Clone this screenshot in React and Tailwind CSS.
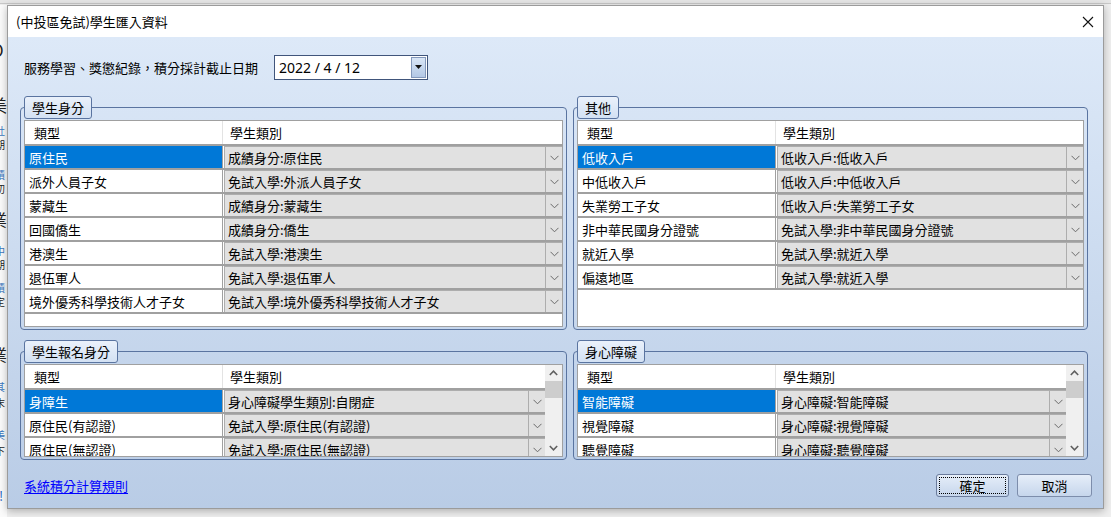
import React from "react";

const upperLeft = [
  ["原住民", "成績身分:原住民"],
  ["派外人員子女", "免試入學:外派人員子女"],
  ["蒙藏生", "成績身分:蒙藏生"],
  ["回國僑生", "成績身分:僑生"],
  ["港澳生", "免試入學:港澳生"],
  ["退伍軍人", "免試入學:退伍軍人"],
  ["境外優秀科學技術人才子女", "免試入學:境外優秀科學技術人才子女"],
];
const upperRight = [
  ["低收入戶", "低收入戶:低收入戶"],
  ["中低收入戶", "低收入戶:中低收入戶"],
  ["失業勞工子女", "低收入戶:失業勞工子女"],
  ["非中華民國身分證號", "免試入學:非中華民國身分證號"],
  ["就近入學", "免試入學:就近入學"],
  ["偏遠地區", "免試入學:就近入學"],
];
const lowerLeft = [
  ["身障生", "身心障礙學生類別:自閉症"],
  ["原住民(有認證)", "免試入學:原住民(有認證)"],
  ["原住民(無認證)", "免試入學:原住民(無認證)"],
];
const lowerRight = [
  ["智能障礙", "身心障礙:智能障礙"],
  ["視覺障礙", "身心障礙:視覺障礙"],
  ["聽覺障礙", "身心障礙:聽覺障礙"],
];

function Chevron() {
  return (
    <svg width="9" height="6" viewBox="0 0 9 6">
      <polyline points="0.5,0.8 4.5,4.8 8.5,0.8" fill="none" stroke="#6a6a6a" strokeWidth="1" />
    </svg>
  );
}

function Group({ title, children }) {
  return (
    <div className="relative pt-[11px] h-full">
      <div className="h-full border border-[#5a74a0] rounded-[4px] pt-[12px] px-[3px] pb-[2px] flex flex-col">
        {children}
      </div>
      <div className="absolute left-[4px] top-0 h-[23px] px-[7px] flex items-center border border-[#5a74a0] rounded-[3px] bg-gradient-to-b from-[#eaf1fb] to-[#d3e1f3] text-[13px] text-black leading-none">
        {title}
      </div>
    </div>
  );
}

function Rows({ rows }) {
  return (
    <>
      <div className="flex h-[25px] border-b-2 border-[#a0a0a0] bg-white shrink-0">
        <div className="w-[198px] shrink-0 border-r border-[#e3e3e3] pl-[9px] flex items-center">類型</div>
        <div className="flex-1 pl-[7px] flex items-center">學生類別</div>
      </div>
      {rows.map(([a, b], i) => (
        <div key={i} className="flex h-[24px] border-b-2 border-[#a0a0a0] shrink-0">
          <div
            className={`w-[198px] shrink-0 pl-[4px] flex items-center border-r border-[#a0a0a0] whitespace-nowrap overflow-hidden ${
              i === 0 ? "bg-[#0078d7] text-white" : "bg-white text-black"
            }`}
          >
            {a}
          </div>
          <div className="flex-1 min-w-0 pl-[1px] bg-white flex">
            <div className="flex-1 min-w-0 flex bg-[#e1e1e1] border-t border-l border-[#adadad]">
              <div className="flex-1 min-w-0 pl-[3px] flex items-center whitespace-nowrap overflow-hidden">{b}</div>
              <div className="w-[17px] shrink-0 border-l border-[#adadad] flex items-center justify-center">
                <Chevron />
              </div>
            </div>
          </div>
        </div>
      ))}
    </>
  );
}

function Table({ rows }) {
  return (
    <div className="flex-1 min-h-0 border border-[#a0a0a0] bg-white flex flex-col overflow-hidden text-[13px] leading-none">
      <Rows rows={rows} />
    </div>
  );
}

function ScrollTable({ rows }) {
  return (
    <div className="flex-1 min-h-0 border border-[#a0a0a0] bg-white flex overflow-hidden text-[13px] leading-none">
      <div className="flex-1 min-w-0 flex flex-col overflow-hidden">
        <Rows rows={rows} />
      </div>
      <div className="w-[17px] shrink-0 bg-[#f0f0f0] flex flex-col">
        <div className="h-[16px] flex items-center justify-center">
          <svg width="9" height="6" viewBox="0 0 9 6">
            <polyline points="0.8,5 4.5,1.2 8.2,5" fill="none" stroke="#606060" strokeWidth="1.6" />
          </svg>
        </div>
        <div className="h-[17px] bg-[#cdcdcd]" />
        <div className="flex-1" />
        <div className="h-[17px] flex items-center justify-center">
          <svg width="9" height="6" viewBox="0 0 9 6">
            <polyline points="0.8,1 4.5,4.8 8.2,1" fill="none" stroke="#606060" strokeWidth="1.6" />
          </svg>
        </div>
      </div>
    </div>
  );
}

function BgChar({ top, left, size, color, children }) {
  return (
    <span
      className="absolute leading-none whitespace-nowrap"
      style={{ top, left, fontSize: size, color }}
    >
      {children}
    </span>
  );
}

export default function App() {
  return (
    <div className="relative w-[1111px] h-[517px] overflow-hidden bg-[#efefef] font-['Noto_Sans_CJK_TC','Noto_Sans',sans-serif] text-black">
      {/* background window behind dialog */}
      <div className="absolute left-0 top-0 w-full h-[4px] bg-[#e6e6e6] border-b border-[#c8c8c8]" />
      <div className="absolute left-0 top-[5px] w-[7px] h-[512px] bg-[#fbfbfb] overflow-hidden">
        <BgChar top={36} left={-9} size={17} color="#222">O</BgChar>
        <BgChar top={91} left={-10} size={17} color="#222">美</BgChar>
        <BgChar top={121} left={-5} size={10} color="#3a78c0">社</BgChar>
        <BgChar top={135} left={-5} size={10} color="#222">期</BgChar>
        <BgChar top={165} left={-5} size={10} color="#3a78c0">積</BgChar>
        <BgChar top={179} left={-5} size={10} color="#222">初</BgChar>
        <BgChar top={206} left={-10} size={17} color="#222">業</BgChar>
        <BgChar top={241} left={-5} size={10} color="#3a78c0">中</BgChar>
        <BgChar top={255} left={-5} size={10} color="#222">期</BgChar>
        <BgChar top={278} left={-5} size={10} color="#3a78c0">積</BgChar>
        <BgChar top={292} left={-5} size={10} color="#222">定</BgChar>
        <BgChar top={341} left={-10} size={17} color="#222">業</BgChar>
        <BgChar top={377} left={-5} size={10} color="#3a78c0">其</BgChar>
        <BgChar top={393} left={-5} size={10} color="#222">末</BgChar>
        <BgChar top={425} left={-5} size={10} color="#3a78c0">美</BgChar>
        <BgChar top={441} left={-5} size={10} color="#222">下</BgChar>
        <BgChar top={484} left={-1} size={13} color="#1f5fbf">!</BgChar>
      </div>

      {/* dialog window */}
      <div className="absolute left-[7px] top-[5px] w-[1097px] h-[504px] border border-[#9b9b9b] bg-white flex flex-col shadow-[0_2px_8px_rgba(0,0,0,0.28)]">
        {/* title bar */}
        <div className="h-[31px] shrink-0 flex items-center justify-between pl-[8px] pr-[9px] bg-white">
          <span className="text-[13px] leading-none">(中投區免試)學生匯入資料</span>
          <svg width="12" height="12" viewBox="0 0 12 12">
            <path d="M1 1 L11 11 M11 1 L1 11" stroke="#111" strokeWidth="1.1" fill="none" />
          </svg>
        </div>

        {/* body */}
        <div className="flex-1 min-h-0 flex flex-col bg-gradient-to-b from-[#dde9f8] to-[#b9cce6]">
          {/* date row */}
          <div className="h-[25px] mt-[18px] pl-[16px] flex items-center shrink-0">
            <span className="text-[13px] leading-none w-[250px]">服務學習、獎懲紀錄，積分採計截止日期</span>
            <div className="w-[154px] h-[25px] border border-[#40557b] bg-white flex items-center pl-[4px] pr-[1px]">
              <span className="flex-1 text-[14px] leading-none font-['Noto_Sans',sans-serif]">2022 / 4 / 12</span>
              <div className="w-[15px] h-[21px] border border-[#8398bb] bg-gradient-to-b from-[#d9e6f6] to-[#b3c8e6] flex items-center justify-center">
                <svg width="7" height="5" viewBox="0 0 7 5">
                  <polygon points="0,0 7,0 3.5,4" fill="#111" />
                </svg>
              </div>
            </div>
          </div>

          {/* groups */}
          <div className="mt-[16px] ml-[12px] grid grid-cols-[547px_515px] grid-rows-[234px_120px] gap-x-[6px] gap-y-[10px] shrink-0">
            <Group title="學生身分">
              <Table rows={upperLeft} />
            </Group>
            <Group title="其他">
              <Table rows={upperRight} />
            </Group>
            <Group title="學生報名身分">
              <ScrollTable rows={lowerLeft} />
            </Group>
            <Group title="身心障礙">
              <ScrollTable rows={lowerRight} />
            </Group>
          </div>

          {/* footer */}
          <div className="mt-[14px] h-[23px] pl-[16px] pr-[11px] flex items-center justify-between shrink-0">
            <a className="text-[13px] leading-none text-[#0000ff] underline underline-offset-2 cursor-pointer">系統積分計算規則</a>
            <div className="flex gap-[8px]">
              <button className="w-[73px] h-[23px] rounded-[3px] border border-[#6b7c9c] bg-gradient-to-b from-[#e6eef9] to-[#c6d6ec] p-[2px]">
                <div className="w-full h-full border border-dotted border-black flex items-center justify-center text-[13px] leading-none">確定</div>
              </button>
              <button className="w-[75px] h-[23px] rounded-[3px] border border-[#7d8dab] bg-gradient-to-b from-[#e6eef9] to-[#c6d6ec] flex items-center justify-center text-[13px] leading-none">
                取消
              </button>
            </div>
          </div>
        </div>
      </div>
    </div>
  );
}
